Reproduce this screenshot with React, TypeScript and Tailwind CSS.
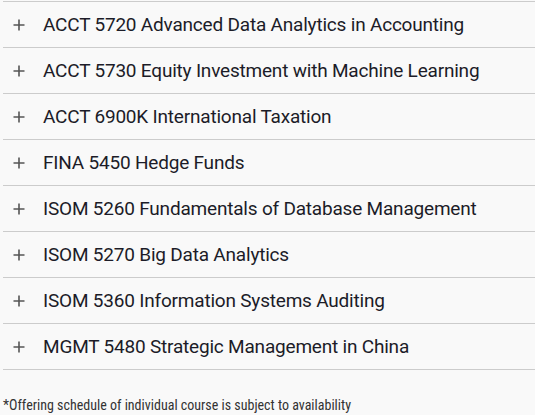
import React from "react";

const courses = [
  "ACCT 5720 Advanced Data Analytics in Accounting",
  "ACCT 5730 Equity Investment with Machine Learning",
  "ACCT 6900K International Taxation",
  "FINA 5450 Hedge Funds",
  "ISOM 5260 Fundamentals of Database Management",
  "ISOM 5270 Big Data Analytics",
  "ISOM 5360 Information Systems Auditing",
  "MGMT 5480 Strategic Management in China",
];

function Plus() {
  return (
    <svg width="12" height="12" viewBox="0 0 12 12" className="shrink-0">
      <path d="M6 0.5V11.5M0.5 6H11.5" stroke="#555" strokeWidth="1.6" />
    </svg>
  );
}

export default function App() {
  return (
    <div
      className="w-[535px] h-[415px] bg-[#f9f9f9] overflow-hidden pt-[1px]"
      style={{ fontFamily: "Roboto, 'Liberation Sans', sans-serif" }}
    >
      <div className="ml-[3px] border-t border-[#cccccc]">
        {courses.map((c) => (
          <div
            key={c}
            className="h-[46px] border-b border-[#cccccc] flex items-center pl-[10px]"
          >
            <Plus />
            <span className="ml-[18px] text-[19px] tracking-[-0.2px] text-[#1c1c28] leading-none">{c}</span>
          </div>
        ))}
      </div>
      <p className="mt-[25px] ml-[3px] text-[14px] leading-[20px] font-stretch-condensed text-[#333] whitespace-nowrap">
        *Offering schedule of individual course is subject to availability
      </p>
    </div>
  );
}
